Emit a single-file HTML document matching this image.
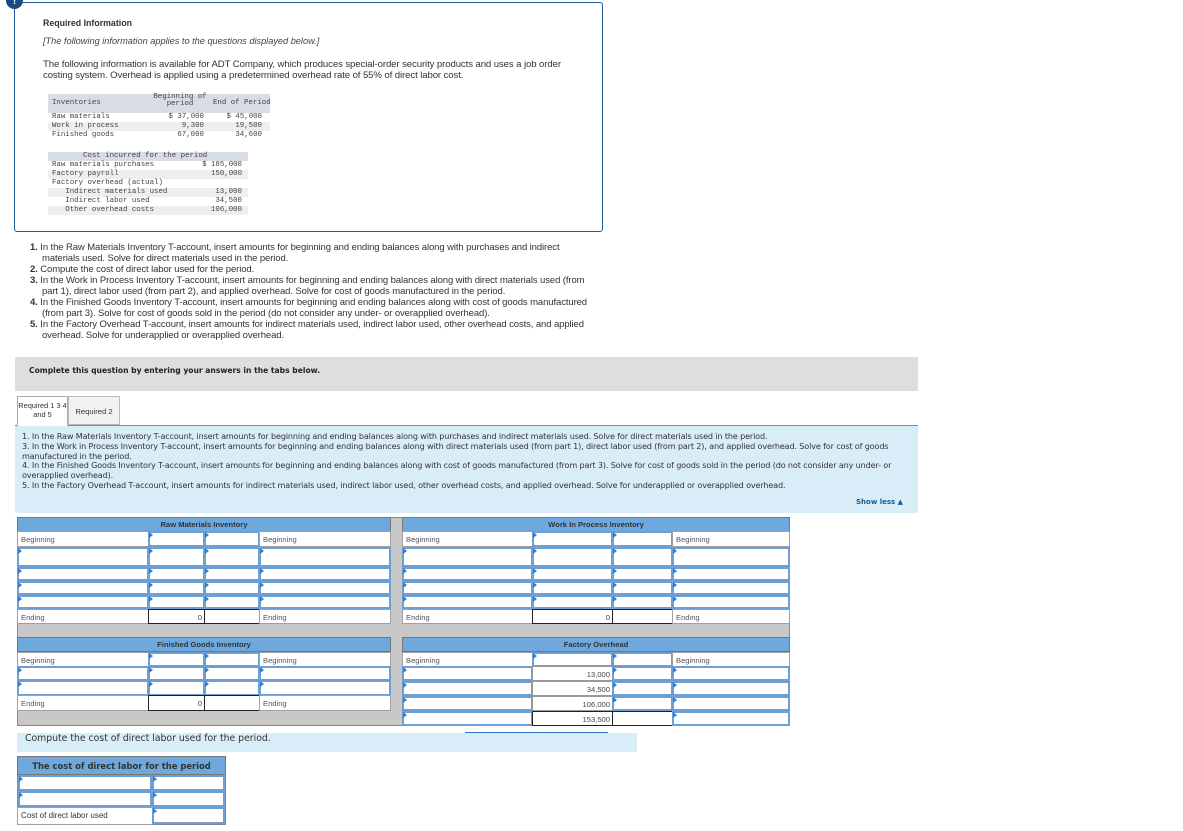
<!DOCTYPE html>
<html><head><meta charset="utf-8"><style>
*{margin:0;padding:0;box-sizing:border-box}
body{width:1183px;height:831px;background:#fff;position:relative;overflow:hidden;font-family:"Liberation Sans",Arial,sans-serif;color:#222}
.a{position:absolute}
.mono{font-family:"Liberation Mono",monospace;font-size:7.4px;color:#444;line-height:9px}
.lb{position:absolute;background:#fff;border:1px solid #a0a0a0;font-size:7.6px;color:#555;padding:3px 0 0 3px}
.in{position:absolute;background:#fff;border:2px solid #6d9fd4;box-shadow:inset 0 0 0 1px #fff}
.in:before{content:"";position:absolute;left:-1px;top:-1px;border-top:3px solid transparent;border-bottom:3px solid transparent;border-left:4px solid #2f7fd0}
.vl{position:absolute;background:#fff;border:1px solid #222;font-size:7.6px;color:#444;text-align:right;padding:3px 2px 0 0}
.hd{position:absolute;background:#6fa8dc;border:1px solid #777;font-size:7.6px;font-weight:bold;color:#333;text-align:center;padding-top:2px}
ol{position:absolute;left:30px;top:243px;width:564px;font-size:9.5px;line-height:10.95px;color:#333;list-style:none;letter-spacing:-0.1px}
ol li{padding-left:12px;text-indent:-12px}
</style></head><body>

<div class="a" style="left:14px;top:2px;width:589px;height:230px;border:1.5px solid #1f5c96;border-radius:3px"></div>
<div class="a" style="left:6px;top:-8px;width:17px;height:17px;border-radius:50%;background:#1a4a80;color:#fff;font-size:10px;font-weight:bold;text-align:center;line-height:20px">!</div>
<div class="a" style="left:43px;top:18px;font-size:8.8px;font-weight:bold;color:#333">Required Information</div>
<div class="a" style="left:43px;top:36px;font-size:9.2px;font-style:italic;color:#444">[The following information applies to the questions displayed below.]</div>
<div class="a" style="left:43px;top:59px;width:522px;font-size:9.6px;line-height:11px;color:#333;letter-spacing:-0.1px">The following information is available for ADT Company, which produces special-order security products and uses a job order costing system. Overhead is applied using a predetermined overhead rate of 55% of direct labor cost.</div>

<div class="a" style="left:48px;top:94px;width:222px;height:19px;background:#d8dce4"></div>
<div class="a" style="left:48px;top:122px;width:222px;height:9px;background:#eeeeee"></div>
<div class="a mono" style="left:52px;top:99px">Inventories</div>
<div class="a mono" style="left:148px;top:94px;width:64px;text-align:center;line-height:7px">Beginning of<br>period</div>
<div class="a mono" style="left:213px;top:99px">End of Period</div>
<div class="a mono" style="left:52px;top:113px">Raw materials<br>Work in process<br>Finished goods</div>
<div class="a mono" style="left:150px;top:113px;width:54px;text-align:right">$ 37,000<br>9,300<br>67,000</div>
<div class="a mono" style="left:210px;top:113px;width:52px;text-align:right">$ 45,000<br>19,500<br>34,600</div>

<div class="a" style="left:48px;top:152px;width:200px;height:9px;background:#d8dce4"></div>
<div class="a" style="left:48px;top:170px;width:200px;height:9px;background:#eeeeee"></div>
<div class="a" style="left:48px;top:188px;width:200px;height:9px;background:#eeeeee"></div>
<div class="a" style="left:48px;top:206px;width:200px;height:9px;background:#eeeeee"></div>
<div class="a mono" style="left:83px;top:152px">Cost incurred for the period</div>
<div class="a mono" style="left:52px;top:161px">Raw materials purchases<br>Factory payroll<br>Factory overhead (actual)<br>&nbsp;&nbsp;&nbsp;Indirect materials used<br>&nbsp;&nbsp;&nbsp;Indirect labor used<br>&nbsp;&nbsp;&nbsp;Other overhead costs</div>
<div class="a mono" style="left:190px;top:161px;width:52px;text-align:right">$ 185,000<br>150,000<br>&nbsp;<br>13,000<br>34,500<br>106,000</div>

<ol>
<li><b>1.</b> In the Raw Materials Inventory T-account, insert amounts for beginning and ending balances along with purchases and indirect materials used. Solve for direct materials used in the period.</li>
<li><b>2.</b> Compute the cost of direct labor used for the period.</li>
<li><b>3.</b> In the Work in Process Inventory T-account, insert amounts for beginning and ending balances along with direct materials used (from part 1), direct labor used (from part 2), and applied overhead. Solve for cost of goods manufactured in the period.</li>
<li><b>4.</b> In the Finished Goods Inventory T-account, insert amounts for beginning and ending balances along with cost of goods manufactured (from part 3). Solve for cost of goods sold in the period (do not consider any under- or overapplied overhead).</li>
<li><b>5.</b> In the Factory Overhead T-account, insert amounts for indirect materials used, indirect labor used, other overhead costs, and applied overhead. Solve for underapplied or overapplied overhead.</li>
</ol>

<div class="a" style="left:15px;top:357px;width:903px;height:34px;background:#dedede"></div>
<div class="a" style="left:29px;top:366px;font-family:'DejaVu Sans',Verdana,sans-serif;font-size:7.6px;font-weight:bold;color:#222">Complete this question by entering your answers in the tabs below.</div>

<div class="a" style="left:17px;top:396px;width:51px;height:30px;background:#fff;border:1px solid #aaa;border-bottom:none;font-family:'Liberation Sans',sans-serif;font-size:7.4px;color:#333;text-align:center;line-height:9px;padding-top:4px;z-index:2;white-space:nowrap">Required 1 3 4<br>and 5</div>
<div class="a" style="left:68px;top:396px;width:52px;height:29px;background:#f2f2f2;border:1px solid #bbb;font-family:'Liberation Sans',sans-serif;font-size:7.6px;color:#333;text-align:center;padding-top:10px">Required 2</div>
<div class="a" style="left:15px;top:425px;width:903px;height:88px;background:#d9edf8;border-top:1px solid #888"></div>
<div class="a" style="left:22px;top:432px;width:892px;font-family:'DejaVu Sans',Verdana,sans-serif;font-size:8.1px;line-height:9.8px;color:#333;letter-spacing:-0.15px">1. In the Raw Materials Inventory T-account, insert amounts for beginning and ending balances along with purchases and indirect materials used. Solve for direct materials used in the period.<br>3. In the Work in Process Inventory T-account, insert amounts for beginning and ending balances along with direct materials used (from part 1), direct labor used (from part 2), and applied overhead. Solve for cost of goods manufactured in the period.<br>4. In the Finished Goods Inventory T-account, insert amounts for beginning and ending balances along with cost of goods manufactured (from part 3). Solve for cost of goods sold in the period (do not consider any under- or overapplied overhead).<br>5. In the Factory Overhead T-account, insert amounts for indirect materials used, indirect labor used, other overhead costs, and applied overhead. Solve for underapplied or overapplied overhead.</div>
<div class="a" style="left:856px;top:498px;font-family:'DejaVu Sans',sans-serif;font-size:7px;font-weight:bold;color:#1b5a96">Show less ▲</div>

<div class="a" style="left:17px;top:517px;width:773px;height:209px;background:#c8c8c8;border:1px solid #888"></div>

<div class="hd" style="left:17px;top:517px;width:374px;height:15px">Raw Materials Inventory</div>
<div class="lb" style="left:17px;top:531px;width:132px;height:16px">Beginning</div>
<div class="in" style="left:148px;top:531px;width:57px;height:16px"></div>
<div class="in" style="left:204px;top:531px;width:56px;height:16px"></div>
<div class="lb" style="left:259px;top:531px;width:132px;height:16px">Beginning</div>
<div class="in" style="left:17px;top:547px;width:132px;height:20px"></div><div class="in" style="left:148px;top:547px;width:57px;height:20px"></div><div class="in" style="left:204px;top:547px;width:56px;height:20px"></div><div class="in" style="left:259px;top:547px;width:132px;height:20px"></div>
<div class="in" style="left:17px;top:567px;width:132px;height:14px"></div><div class="in" style="left:148px;top:567px;width:57px;height:14px"></div><div class="in" style="left:204px;top:567px;width:56px;height:14px"></div><div class="in" style="left:259px;top:567px;width:132px;height:14px"></div>
<div class="in" style="left:17px;top:581px;width:132px;height:14px"></div><div class="in" style="left:148px;top:581px;width:57px;height:14px"></div><div class="in" style="left:204px;top:581px;width:56px;height:14px"></div><div class="in" style="left:259px;top:581px;width:132px;height:14px"></div>
<div class="in" style="left:17px;top:595px;width:132px;height:14px"></div><div class="in" style="left:148px;top:595px;width:57px;height:14px"></div><div class="in" style="left:204px;top:595px;width:56px;height:14px"></div><div class="in" style="left:259px;top:595px;width:132px;height:14px"></div>
<div class="lb" style="left:17px;top:609px;width:132px;height:15px">Ending</div>
<div class="vl" style="left:148px;top:609px;width:57px;height:15px">0</div>
<div class="vl" style="left:204px;top:609px;width:56px;height:15px"></div>
<div class="lb" style="left:259px;top:609px;width:132px;height:15px">Ending</div>

<div class="hd" style="left:402px;top:517px;width:388px;height:15px">Work In Process Inventory</div>
<div class="lb" style="left:402px;top:531px;width:131px;height:16px">Beginning</div>
<div class="in" style="left:532px;top:531px;width:81px;height:16px"></div>
<div class="in" style="left:612px;top:531px;width:61px;height:16px"></div>
<div class="lb" style="left:672px;top:531px;width:118px;height:16px">Beginning</div>
<div class="in" style="left:402px;top:547px;width:131px;height:20px"></div><div class="in" style="left:532px;top:547px;width:81px;height:20px"></div><div class="in" style="left:612px;top:547px;width:61px;height:20px"></div><div class="in" style="left:672px;top:547px;width:118px;height:20px"></div>
<div class="in" style="left:402px;top:567px;width:131px;height:14px"></div><div class="in" style="left:532px;top:567px;width:81px;height:14px"></div><div class="in" style="left:612px;top:567px;width:61px;height:14px"></div><div class="in" style="left:672px;top:567px;width:118px;height:14px"></div>
<div class="in" style="left:402px;top:581px;width:131px;height:14px"></div><div class="in" style="left:532px;top:581px;width:81px;height:14px"></div><div class="in" style="left:612px;top:581px;width:61px;height:14px"></div><div class="in" style="left:672px;top:581px;width:118px;height:14px"></div>
<div class="in" style="left:402px;top:595px;width:131px;height:14px"></div><div class="in" style="left:532px;top:595px;width:81px;height:14px"></div><div class="in" style="left:612px;top:595px;width:61px;height:14px"></div><div class="in" style="left:672px;top:595px;width:118px;height:14px"></div>
<div class="lb" style="left:402px;top:609px;width:131px;height:15px">Ending</div>
<div class="vl" style="left:532px;top:609px;width:81px;height:15px">0</div>
<div class="vl" style="left:612px;top:609px;width:61px;height:15px"></div>
<div class="lb" style="left:672px;top:609px;width:118px;height:15px">Ending</div>

<div class="hd" style="left:17px;top:637px;width:374px;height:15px">Finished Goods Inventory</div>
<div class="lb" style="left:17px;top:652px;width:132px;height:15px">Beginning</div>
<div class="in" style="left:148px;top:652px;width:57px;height:15px"></div>
<div class="in" style="left:204px;top:652px;width:56px;height:15px"></div>
<div class="lb" style="left:259px;top:652px;width:132px;height:15px">Beginning</div>
<div class="in" style="left:17px;top:666px;width:132px;height:15px"></div><div class="in" style="left:148px;top:666px;width:57px;height:15px"></div><div class="in" style="left:204px;top:666px;width:56px;height:15px"></div><div class="in" style="left:259px;top:666px;width:132px;height:15px"></div>
<div class="in" style="left:17px;top:680px;width:132px;height:16px"></div><div class="in" style="left:148px;top:680px;width:57px;height:16px"></div><div class="in" style="left:204px;top:680px;width:56px;height:16px"></div><div class="in" style="left:259px;top:680px;width:132px;height:16px"></div>
<div class="lb" style="left:17px;top:695px;width:132px;height:16px">Ending</div>
<div class="vl" style="left:148px;top:695px;width:57px;height:16px">0</div>
<div class="vl" style="left:204px;top:695px;width:56px;height:16px"></div>
<div class="lb" style="left:259px;top:695px;width:132px;height:16px">Ending</div>

<div class="hd" style="left:402px;top:637px;width:388px;height:15px">Factory Overhead</div>
<div class="lb" style="left:402px;top:652px;width:131px;height:15px">Beginning</div>
<div class="in" style="left:532px;top:652px;width:81px;height:15px"></div>
<div class="in" style="left:612px;top:652px;width:61px;height:15px"></div>
<div class="lb" style="left:672px;top:652px;width:118px;height:15px">Beginning</div>
<div class="in" style="left:402px;top:666px;width:131px;height:15px"></div><div class="vl" style="left:532px;top:666px;width:81px;height:15px;border-color:#999">13,000</div><div class="in" style="left:612px;top:666px;width:61px;height:15px"></div><div class="in" style="left:672px;top:666px;width:118px;height:15px"></div>
<div class="in" style="left:402px;top:681px;width:131px;height:15px"></div><div class="vl" style="left:532px;top:681px;width:81px;height:15px;border-color:#999">34,500</div><div class="in" style="left:612px;top:681px;width:61px;height:15px"></div><div class="in" style="left:672px;top:681px;width:118px;height:15px"></div>
<div class="in" style="left:402px;top:696px;width:131px;height:15px"></div><div class="vl" style="left:532px;top:696px;width:81px;height:15px;border-color:#999">106,000</div><div class="in" style="left:612px;top:696px;width:61px;height:15px"></div><div class="in" style="left:672px;top:696px;width:118px;height:15px"></div>
<div class="in" style="left:402px;top:711px;width:131px;height:15px"></div><div class="vl" style="left:532px;top:711px;width:81px;height:15px">153,500</div><div class="vl" style="left:612px;top:711px;width:61px;height:15px"></div><div class="in" style="left:672px;top:711px;width:118px;height:15px"></div>

<div class="a" style="left:17px;top:733px;width:620px;height:19px;background:#d9edf8"></div>
<div class="a" style="left:465px;top:732px;width:143px;height:1px;background:#2a6fb8"></div>
<div class="a" style="left:25px;top:733px;font-family:'DejaVu Sans',Verdana,sans-serif;font-size:9.3px;color:#333">Compute the cost of direct labor used for the period.</div>
<div class="hd" style="left:17px;top:756px;width:209px;height:19px;font-size:8.4px;padding-top:4px;font-family:'DejaVu Sans',sans-serif">The cost of direct labor for the period</div>
<div class="a" style="left:17px;top:775px;width:209px;height:50px;background:#c8c8c8;border:1px solid #888"></div>
<div class="in" style="left:18px;top:775px;width:134px;height:16px"></div><div class="in" style="left:152px;top:775px;width:73px;height:16px"></div>
<div class="in" style="left:18px;top:791px;width:134px;height:16px"></div><div class="in" style="left:152px;top:791px;width:73px;height:16px"></div>
<div class="lb" style="left:17px;top:807px;width:136px;height:18px;font-size:8px;color:#333">Cost of direct labor used</div>
<div class="in" style="left:152px;top:807px;width:73px;height:17px"></div>
</body></html>
